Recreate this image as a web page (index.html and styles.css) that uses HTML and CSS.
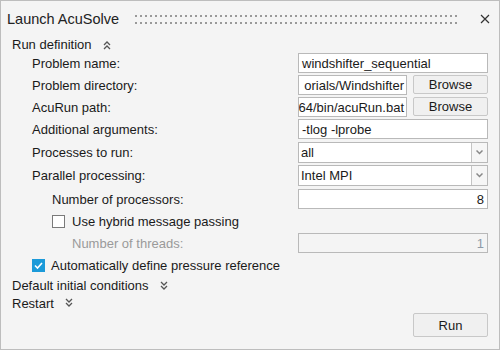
FILE: index.html
```html
<!DOCTYPE html>
<html>
<head>
    <title>Launch AcuSolve</title>
    <link rel="stylesheet" href="styles.css">
</head>
<body>
    <div class="dialog">
        <div class="titlebar">
            <span class="title">Launch AcuSolve</span>
            <span class="grip"></span>
            <svg class="close" width="10" height="10" viewBox="0 0 10 10">
                <path d="M1 1 L9 9 M9 1 L1 9" stroke="#333" stroke-width="1.2" fill="none"/>
            </svg>
        </div>
        <div class="content">
            <div class="section section--top">
                <span>Run definition</span>
                <svg class="chevron" width="8" height="10" viewBox="0 0 8 10">
                    <path d="M1 5 L4 2 L7 5 M1 9 L4 6 L7 9" stroke="#555" stroke-width="1.3" fill="none"/>
                </svg>
            </div>

            <div class="row">
                <label class="lbl">Problem name:</label>
                <div class="field">windshifter_sequential</div>
            </div>
            <div class="row">
                <label class="lbl">Problem directory:</label>
                <div class="browseWrap">
                    <div class="field field--end">orials/Windshifter</div>
                    <a href="#" class="btn">Browse</a>
                </div>
            </div>
            <div class="row">
                <label class="lbl">AcuRun path:</label>
                <div class="browseWrap">
                    <div class="field field--end">64/bin/acuRun.bat</div>
                    <a href="#" class="btn">Browse</a>
                </div>
            </div>
            <div class="row">
                <label class="lbl">Additional arguments:</label>
                <div class="field">-tlog -lprobe</div>
            </div>
            <div class="row row--gap3">
                <label class="lbl">Processes to run:</label>
                <div class="select">
                    <span class="select__value">all</span>
                    <span class="select__arrow">
                        <svg width="7" height="5" viewBox="0 0 7 5"><path d="M0.5 0.5 L3.5 3.5 L6.5 0.5" stroke="#888" stroke-width="1.5" fill="none"/></svg>
                    </span>
                </div>
            </div>
            <div class="row row--gap3">
                <label class="lbl">Parallel processing:</label>
                <div class="select">
                    <span class="select__value">Intel MPI</span>
                    <span class="select__arrow">
                        <svg width="7" height="5" viewBox="0 0 7 5"><path d="M0.5 0.5 L3.5 3.5 L6.5 0.5" stroke="#888" stroke-width="1.5" fill="none"/></svg>
                    </span>
                </div>
            </div>
            <div class="row row--gap4">
                <label class="lbl lbl--l2">Number of processors:</label>
                <div class="field field--num">8</div>
            </div>
            <div class="row">
                <label class="check check--l2">
                    <span class="box"></span>
                    <span>Use hybrid message passing</span>
                </label>
            </div>
            <div class="row">
                <label class="lbl lbl--l3 lbl--off">Number of threads:</label>
                <div class="field field--num field--off">1</div>
            </div>
            <div class="row">
                <label class="check check--l1">
                    <span class="box box--on">
                        <svg width="13" height="13" viewBox="0 0 13 13"><path d="M3 6.5 L5.5 9 L10 4" stroke="#fff" stroke-width="1.6" fill="none"/></svg>
                    </span>
                    <span>Automatically define pressure reference</span>
                </label>
            </div>

            <div class="section section--default">
                <span>Default initial conditions</span>
                <svg class="chevron" width="8" height="10" viewBox="0 0 8 10">
                    <path d="M1 1 L4 4 L7 1 M1 5 L4 8 L7 5" stroke="#555" stroke-width="1.3" fill="none"/>
                </svg>
            </div>
            <div class="section section--restart">
                <span>Restart</span>
                <svg class="chevron" width="8" height="10" viewBox="0 0 8 10">
                    <path d="M1 1 L4 4 L7 1 M1 5 L4 8 L7 5" stroke="#555" stroke-width="1.3" fill="none"/>
                </svg>
            </div>

            <div class="footer">
                <a href="#" class="btn btn--run">Run</a>
            </div>
        </div>
    </div>
</body>
</html>
```

FILE: styles.css
```css
html, body {
    margin: 0;
    font-family: "Liberation Sans", Arial, sans-serif;
    font-size: 13px;
    color: #1a1a1a;
}

.dialog {
    box-sizing: border-box;
    width: 500px;
    height: 350px;
    background: #f4f4f4;
    border: 1px solid #bdbdbd;
}

.titlebar {
    display: flex;
    align-items: center;
    height: 36px;
    padding: 0 9px 0 6px;
}

.title {
    font-size: 14.5px;
    color: #222;
}

.grip {
    flex: 1;
    height: 9px;
    margin: 0 22px 0 16px;
    background:
        linear-gradient(90deg, #999 2px, transparent 2px) 0 0 / 5px 2px repeat-x,
        linear-gradient(90deg, #999 2px, transparent 2px) 0 7px / 5px 2px repeat-x;
}

.close {
    display: block;
}

.content {
    padding: 0 11px;
}

.section {
    display: flex;
    align-items: center;
    gap: 11px;
}

.section--top {
    height: 15px;
}

.section--default {
    height: 19px;
    margin-top: 1px;
}

.section--restart {
    height: 16px;
}

.chevron {
    display: block;
}

.row {
    display: flex;
    align-items: center;
    height: 20px;
    margin-top: 2px;
}

.section--top + .row {
    margin-top: 1px;
}

.row--gap3 {
    margin-top: 3px;
}

.row--gap4 {
    margin-top: 4px;
}

.lbl {
    flex: 1;
    padding-left: 20px;
}

.lbl--l2 {
    padding-left: 40px;
}

.lbl--l3 {
    padding-left: 60px;
}

.lbl--off {
    color: #9a9a9a;
}

.field {
    box-sizing: border-box;
    display: flex;
    align-items: center;
    width: 190px;
    height: 20px;
    padding: 0 3px;
    background: #fff;
    border: 1px solid #b9b9b9;
    white-space: nowrap;
    overflow: hidden;
}

.field--end {
    justify-content: flex-end;
    padding: 0 2px 0 0;
}

.field--num {
    justify-content: flex-end;
}

.field--off {
    background: #f4f4f4;
    color: #8e9aa8;
}

.browseWrap {
    display: flex;
    gap: 6px;
    width: 190px;
}

.browseWrap .field {
    flex: 1;
    width: auto;
}

.btn {
    box-sizing: border-box;
    display: flex;
    align-items: center;
    justify-content: center;
    width: 75px;
    height: 19px;
    color: #1a1a1a;
    text-decoration: none;
    background: #f0f0f0;
    border: 1px solid #c8c8c8;
    border-radius: 2px;
}

.select {
    box-sizing: border-box;
    display: flex;
    width: 190px;
    height: 21px;
    background: #fff;
    border: 1px solid #b9b9b9;
}

.select__value {
    flex: 1;
    display: flex;
    align-items: center;
    padding-left: 2px;
}

.select__arrow {
    display: flex;
    align-items: center;
    justify-content: center;
    width: 15px;
    background: #f6f6f6;
    border-left: 1px solid #c4c4c4;
}

.check {
    display: flex;
    align-items: center;
}

.check--l1 {
    padding-left: 20px;
    gap: 6px;
}

.check--l2 {
    padding-left: 40px;
    gap: 7px;
}

.box {
    box-sizing: border-box;
    display: block;
    width: 13px;
    height: 13px;
    background: #fff;
    border: 1px solid #7a7a7a;
}

.box--on {
    background: #1b9ad9;
    border-color: #1b9ad9;
}

.box--on svg {
    display: block;
    margin: -1px;
}

.footer {
    display: flex;
    justify-content: flex-end;
    margin-top: 2px;
}

.btn--run {
    height: 24px;
}
```
